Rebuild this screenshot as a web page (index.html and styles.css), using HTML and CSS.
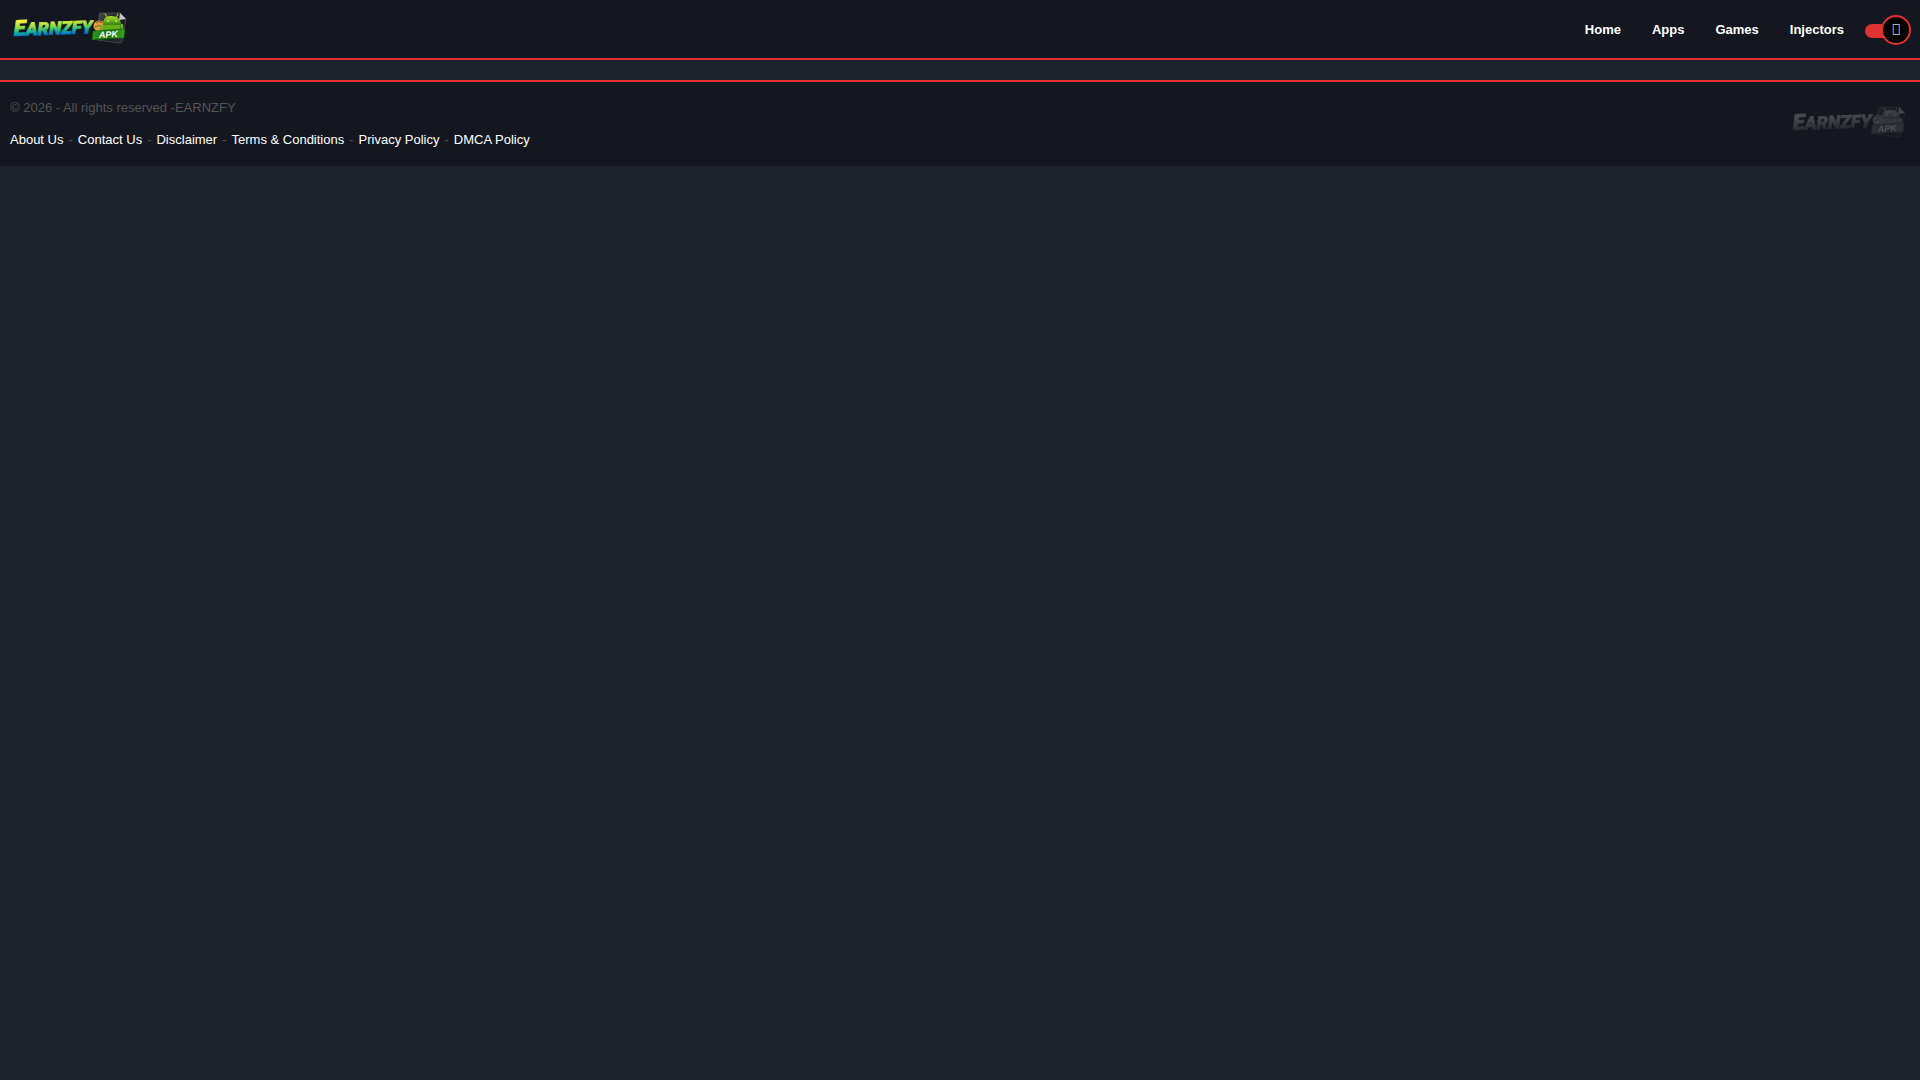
FILE: index.html
```html
<!DOCTYPE html>
<html lang="en">
<head>
<meta charset="utf-8">
<meta name="viewport" content="width=device-width, initial-scale=1">
<title>EARNZFY</title>
<link rel="stylesheet" href="styles.css">
</head>
<body>
<svg class="defs" width="0" height="0" aria-hidden="true">
  <defs>
    <linearGradient id="word" x1="0" y1="0" x2="0.06" y2="1">
      <stop offset="0.25" stop-color="#f2ee3c"/>
      <stop offset="0.48" stop-color="#8ede3c"/>
      <stop offset="0.66" stop-color="#12b59a"/>
      <stop offset="0.82" stop-color="#0874d0"/>
    </linearGradient>
    <linearGradient id="robot" x1="0" y1="0" x2="0" y2="1">
      <stop offset="0" stop-color="#b5e32c"/>
      <stop offset="1" stop-color="#3c8d0c"/>
    </linearGradient>
    <linearGradient id="ribbon" x1="0" y1="0" x2="1" y2="0">
      <stop offset="0" stop-color="#2f9c1c"/>
      <stop offset="0.5" stop-color="#16700f"/>
      <stop offset="1" stop-color="#37a81e"/>
    </linearGradient>
    <linearGradient id="sheet" x1="0" y1="0" x2="1" y2="1">
      <stop offset="0" stop-color="#4a4e52"/>
      <stop offset="0.5" stop-color="#17191c"/>
      <stop offset="1" stop-color="#2c2f34"/>
    </linearGradient>
    <symbol id="logo" viewBox="0 0 120 36">
      <path d="M89 5 Q89 3 91 3 L110 3 L116 9 L112 31 Q112 33 110 33 L87 30 Z" fill="url(#sheet)" stroke="#50555c" stroke-width="0.7"/>
      <path d="M110 3 L116 9 L109 10 Z" fill="#c3c6c9"/>
      <circle cx="89" cy="16" r="5.5" fill="#e2a044"/>
      <path d="M86 13 Q89 10 92 13 M85 17 Q89 14 92 17" fill="none" stroke="#8d4f1c"/>
      <path d="M93 14 Q93 6 101 6 Q110 6 111 14 Z" fill="url(#robot)"/>
      <path d="M95 4 L98 8 M108 4 L106 8" stroke="#91c922" stroke-width="1.2" stroke-linecap="round"/>
      <circle cx="98" cy="11" r="0.8" fill="#fff"/><circle cx="106" cy="11" r="0.8" fill="#fff"/>
      <path d="M93 14 H111 L110 22 H92 Z" fill="#62ad18"/>
      <path d="M93 14.5 H111" stroke="#2f6d0c" stroke-width="0.6"/>
      <path d="M91 16 V20 M112 15 V19" stroke="#72b41c" stroke-width="2.4" stroke-linecap="round"/>
      <path d="M83 21 L115 19 L114 28 L82 30 Z" fill="url(#ribbon)" stroke="#0d4f0c" stroke-width="0.6"/>
      <text class="logo-word" x="4" y="26" transform="rotate(-2 4 26)" fill="url(#word)" stroke="url(#word)" stroke-width="0.7"><tspan class="logo-initial">E</tspan>ARNZFY</text>
      <text class="logo-tag" x="89" y="28" transform="rotate(-3 89 28)" fill="#fff">APK</text>
    </symbol>
  </defs>
</svg>
<header class="header">
  <a class="brand" href="#" aria-label="EARNZFY APK"><svg class="logo"><use href="#logo"/></svg></a>
  <nav class="nav" aria-label="Main">
    <a href="#">Home</a>
    <a href="#">Apps</a>
    <a href="#">Games</a>
    <a href="#">Injectors</a>
  </nav>
  <label class="switch">
    <input class="switch-input" type="checkbox" aria-label="Dark mode" checked>
    <span class="switch-knob" aria-hidden="true">&#xf186;</span>
  </label>
</header>
<main class="content"></main>
<footer class="footer">
  <div class="footer-text">
    <p class="copyright">© 2026 - All rights reserved -EARNZFY</p>
    <ul class="links">
      <li><a href="#">About Us</a></li>
      <li><a href="#">Contact Us</a></li>
      <li><a href="#">Disclaimer</a></li>
      <li><a href="#">Terms &amp; Conditions</a></li>
      <li><a href="#">Privacy Policy</a></li>
      <li><a href="#">DMCA Policy</a></li>
    </ul>
  </div>
  <a class="brand" href="#" aria-label="EARNZFY APK home"><svg class="logo logo-muted"><use href="#logo"/></svg></a>
</footer>
</body>
</html>
```
FILE: styles.css
```css
* {
  box-sizing: border-box;
}

body {
  margin: 0;
  background: #1e222d;
  color: #fff;
  font: 13px/20px "Liberation Sans", Arial, sans-serif;
}

a {
  color: inherit;
  text-decoration: none;
}

.defs {
  position: absolute;
}

.header {
  display: flex;
  align-items: center;
  min-height: 60px;
  padding: 2px 9px 0 10px;
  background: #14171f;
  border-bottom: 2px solid #e03232;
}

.brand {
  display: block;
  padding-bottom: 4px;
}

.logo {
  display: block;
  width: 120px;
  height: 36px;
}

.logo-muted {
  filter: grayscale(1);
  opacity: 0.25;
}

.logo-word {
  font: italic 900 18px Roboto, sans-serif;
}

.logo-initial {
  font-size: 22px;
}

.logo-tag {
  font: italic 700 9px "Liberation Sans", Arial, sans-serif;
}

.nav {
  display: flex;
  gap: 31px;
  margin-left: auto;
  font-weight: 700;
}

.switch {
  position: relative;
  display: flex;
  align-items: center;
  width: 46px;
  height: 30px;
  margin-left: 21px;
  cursor: pointer;
}

.switch-input {
  appearance: none;
  width: 40px;
  height: 14px;
  margin: 2px 0 0;
  border-radius: 7px;
  background: #e03232;
}

.switch-knob {
  position: absolute;
  top: 0;
  right: 0;
  width: 30px;
  height: 30px;
  border: 2px solid #e03232;
  border-radius: 50%;
  background: #000;
  color: #ccc;
  font-family: "DejaVu Sans", sans-serif;
  font-size: 13px;
  line-height: 24px;
  text-align: center;
}

.content {
  min-height: 20px;
}

.footer {
  display: flex;
  align-items: center;
  justify-content: space-between;
  padding: 16px 11px 16px 10px;
  background: #14171f;
  border-top: 2px solid #e03232;
  color: #555;
}

.copyright {
  margin: 0 0 12px;
}

.links {
  display: flex;
  flex-wrap: wrap;
  margin: 0;
  padding: 0;
  list-style: none;
}

.links a {
  color: #fff;
}

.links li + li::before {
  content: "-";
  margin: 0 5px;
}
```
